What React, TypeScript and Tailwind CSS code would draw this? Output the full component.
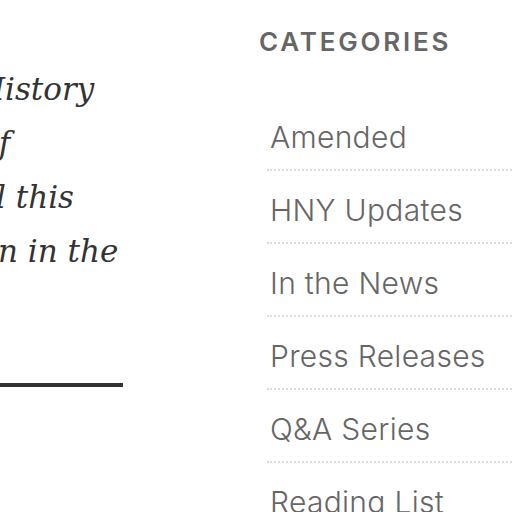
const categories = [
  "Amended",
  "HNY Updates",
  "In the News",
  "Press Releases",
  "Q&A Series",
  "Reading List",
];

export default function App() {
  return (
    <div className="w-[512px] h-[512px] overflow-hidden bg-white flex">
      <div className="w-[125px] shrink-0 overflow-hidden pt-[62px]">
        <div className="font-['DejaVu_Serif',serif] italic text-[31px] leading-[54px] text-[#333]">
          <div className="whitespace-nowrap ml-[-22px]">History</div>
          <div className="whitespace-nowrap ml-[-20px]">of</div>
          <div className="whitespace-nowrap ml-[-4px]">l this</div>
          <div className="whitespace-nowrap ml-[-2px]">n in the</div>
        </div>
        <div className="mt-[105px] h-[4px] w-[123px] bg-[#333]" />
      </div>

      <div className="ml-[134px] flex-1 pt-[24px] font-['Inter',sans-serif]">
        <h2 className="text-[26px] leading-[36px] font-semibold tracking-[2.8px] text-[#666]">
          CATEGORIES
        </h2>
        <ul className="mt-[38px] ml-[8px]">
          {categories.map((c) => (
            <li
              key={c}
              className="border-b-2 border-dotted border-[#ddd] pt-[16px] pb-[9px]"
            >
              <span className="block pl-[3px] text-[30px] leading-[46px] font-light tracking-[0.3px] text-[#666]">
                {c}
              </span>
            </li>
          ))}
        </ul>
      </div>
    </div>
  );
}
